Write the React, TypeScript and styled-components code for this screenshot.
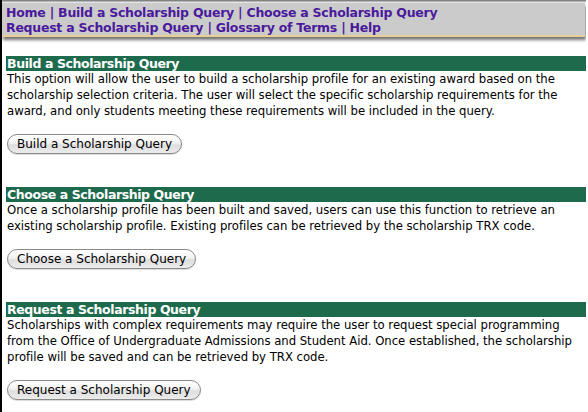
import React from 'react';
import styled, { createGlobalStyle } from 'styled-components';

const GlobalStyle = createGlobalStyle`
  html, body {
    margin: 0;
    padding: 0;
    background: #fff;
  }
  body {
    font-family: Verdana, "DejaVu Sans", sans-serif;
    font-size: 12px;
    color: #000;
  }
`;

const Page = styled.div`
  width: 586px;
  height: 412px;
  border-left: 2px solid #000;
  overflow: hidden;
  box-sizing: border-box;
  padding-top: 3px;
  background: linear-gradient(#6a6a6a, #fff 3px);
`;

const NavBar = styled.nav`
  width: 583px;
  background: #cbcbcb;
  border-bottom: 2px solid #e6cf94;
  box-shadow: 1px 3px 3px rgba(0, 0, 0, 0.55);
  padding: 2px 4px 0;
  box-sizing: border-box;
  line-height: 15px;
  font-weight: bold;
  font-size: 12.5px;
  letter-spacing: -0.25px;
`;

const NavLink = styled.a`
  color: #4a1a9c;
  text-decoration: none;
`;

const Sep = styled.span`
  color: #4a1a9c;
`;

const Main = styled.main`
  padding: 19px 0 0 4px;
`;

const Section = styled.section`
  margin-bottom: 33px;
`;

const SectionTitle = styled.h2`
  margin: 0;
  background: #1d6b4c;
  color: #fff;
  font-size: 12.5px;
  font-weight: bold;
  letter-spacing: -0.4px;
  line-height: 15px;
  padding: 0 0 0 1px;
  width: 579px;
`;

const Text = styled.p`
  margin: 0;
  font-size: 11.7px;
  line-height: 16px;
  padding-left: 1px;
  letter-spacing: -0.03px;
  width: 578px;
`;

const ButtonRow = styled.div`
  padding: 15px 0 0 1px;
`;

const PillButton = styled.button`
  font-family: "Lucida Grande", "DejaVu Sans", sans-serif;
  font-size: 12px;
  height: 20px;
  padding: 0 9px;
  border-radius: 10px;
  border: 1px solid #8a8a8a;
  background: linear-gradient(#ffffff, #f2f2f2 45%, #dedede 55%, #ececec);
  box-shadow: 0 1px 1px rgba(0, 0, 0, 0.15);
  color: #000;
  cursor: pointer;
`;

const sections = [
  {
    title: 'Build a Scholarship Query',
    text: 'This option will allow the user to build a scholarship profile for an existing award based on the scholarship selection criteria. The user will select the specific scholarship requirements for the award, and only students meeting these requirements will be included in the query.',
  },
  {
    title: 'Choose a Scholarship Query',
    text: 'Once a scholarship profile has been built and saved, users can use this function to retrieve an existing scholarship profile. Existing profiles can be retrieved by the scholarship TRX code.',
  },
  {
    title: 'Request a Scholarship Query',
    text: 'Scholarships with complex requirements may require the user to request special programming from the Office of Undergraduate Admissions and Student Aid. Once established, the scholarship profile will be saved and can be retrieved by TRX code.',
  },
];

const App = () => {
  return (
    <Page>
      <GlobalStyle />
      <NavBar>
        <NavLink href="#">Home</NavLink> <Sep>|</Sep>{' '}
        <NavLink href="#">Build a Scholarship Query</NavLink> <Sep>|</Sep>{' '}
        <NavLink href="#">Choose a Scholarship Query</NavLink>
        <br />
        <NavLink href="#">Request a Scholarship Query</NavLink> <Sep>|</Sep>{' '}
        <NavLink href="#">Glossary of Terms</NavLink> <Sep>|</Sep>{' '}
        <NavLink href="#">Help</NavLink>
      </NavBar>
      <Main>
        {sections.map((s) => (
          <Section key={s.title}>
            <SectionTitle>{s.title}</SectionTitle>
            <Text>{s.text}</Text>
            <ButtonRow>
              <PillButton type="button">{s.title}</PillButton>
            </ButtonRow>
          </Section>
        ))}
      </Main>
    </Page>
  );
};

export default App;
